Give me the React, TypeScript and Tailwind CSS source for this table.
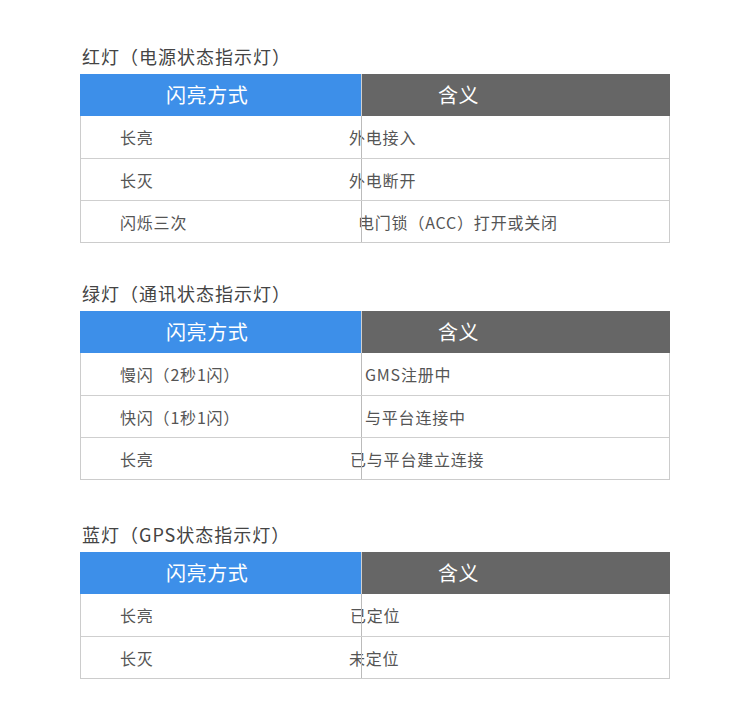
const FONT = { fontFamily: '"Noto Sans CJK SC", "Noto Sans", sans-serif' }

type Row = { mode: string; meaning: string; shift: string }

const TABLES: { title: string; rows: Row[]; gap: string }[] = [
  {
    title: '红灯（电源状态指示灯）',
    gap: 'mt-[44px]',
    rows: [
      { mode: '长亮', meaning: '外电接入', shift: 'ml-[-12px]' },
      { mode: '长灭', meaning: '外电断开', shift: 'ml-[-12px]' },
      { mode: '闪烁三次', meaning: '电门锁（ACC）打开或关闭', shift: 'ml-[-3px]' },
    ],
  },
  {
    title: '绿灯（通讯状态指示灯）',
    gap: 'mt-[38px]',
    rows: [
      { mode: '慢闪（2秒1闪）', meaning: 'GMS注册中', shift: 'ml-[4px]' },
      { mode: '快闪（1秒1闪）', meaning: '与平台连接中', shift: 'ml-[4px]' },
      { mode: '长亮', meaning: '已与平台建立连接', shift: 'ml-[-11px]' },
    ],
  },
  {
    title: '蓝灯（GPS状态指示灯）',
    gap: 'mt-[42px]',
    rows: [
      { mode: '长亮', meaning: '已定位', shift: 'ml-[-11px]' },
      { mode: '长灭', meaning: '未定位', shift: 'ml-[-12px]' },
    ],
  },
]

export default function App() {
  return (
    <div className="flex h-[720px] w-[750px] flex-col bg-white pl-[80px]" style={FONT}>
      {TABLES.map((t) => (
        <section key={t.title} className={t.gap}>
          <h2 className="h-[24px] pl-[2px] text-[18px] leading-[24px] tracking-[1px] text-[#444]">
            {t.title}
          </h2>
          <div className="mt-[6px] w-[590px]">
            <div className="flex h-[42px] text-[20px] tracking-[0.6px] text-white">
              <div className="flex w-[281px] items-center bg-[#3d8fe9] pl-[86px]">闪亮方式</div>
              <div className="flex flex-1 items-center border-l border-[#d0d0d0] bg-[#666666] pl-[76px]">
                含义
              </div>
            </div>
            <div className="border-x border-b border-[#cccccc] text-[16px] tracking-[0.8px] text-[#555]">
              {t.rows.map((r, i) => (
                <div
                  key={r.mode}
                  className={`flex h-[42px] ${i > 0 ? 'border-t border-[#cfcfcf]' : ''}`}
                >
                  <div className="flex w-[280px] items-center pl-[39px]">{r.mode}</div>
                  <div className="relative flex flex-1 items-center">
                    <span className={`whitespace-nowrap ${r.shift}`}>{r.meaning}</span>
                    <div className="absolute inset-y-0 left-0 w-px bg-[#bbbbbb]" />
                  </div>
                </div>
              ))}
            </div>
          </div>
        </section>
      ))}
    </div>
  )
}
